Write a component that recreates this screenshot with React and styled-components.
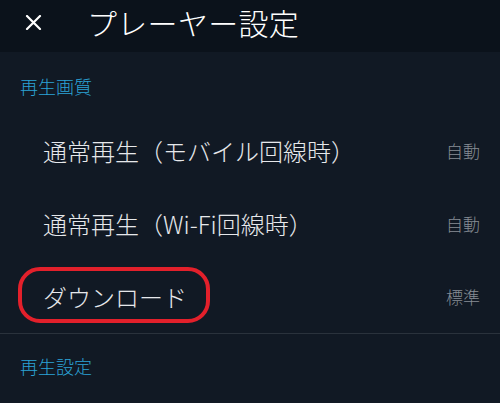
import React from "react";
import styled, { createGlobalStyle } from "styled-components";

const Global = createGlobalStyle`
  html, body { margin: 0; padding: 0; background: #111924; }
  body { font-family: "Noto Sans CJK JP", "Noto Sans", sans-serif; }
`;

const Screen = styled.div`
  width: 500px;
  height: 403px;
  overflow: hidden;
  background: #111924;
  display: flex;
  flex-direction: column;
`;

const Header = styled.header`
  height: 52px;
  flex: none;
  background: #0b121b;
  display: flex;
  align-items: center;
  box-sizing: border-box;
  padding: 0 0 8px 24px;
`;

const CloseBtn = styled.button`
  width: 19px;
  height: 19px;
  padding: 0;
  border: 0;
  background: none;
  display: flex;
  align-items: center;
  justify-content: center;
  margin-right: 44px;
`;

const Title = styled.h1`
  margin: 0;
  font-size: 30px;
  font-weight: 300;
  line-height: 36px;
  color: #ffffff;
  letter-spacing: 0.3px;
`;

const SectionLabel = styled.div`
  padding: ${(p) => (p.$first ? "24px 20px 18px" : "22px 20px 18px")};
  font-size: 18px;
  font-weight: 300;
  line-height: 20px;
  color: #2ba3d6;
`;

const Row = styled.div`
  position: relative;
  height: 73px;
  display: flex;
  align-items: center;
  justify-content: space-between;
  padding: 0 20px 0 43px;
  box-sizing: border-box;
`;

const RowLabel = styled.span`
  font-size: 24px;
  font-weight: 300;
  line-height: 30px;
  color: #e6e8eb;
`;

const RowValue = styled.span`
  font-size: 17px;
  font-weight: 300;
  line-height: 24px;
  color: #878d95;
`;

const Highlight = styled.div`
  position: absolute;
  left: 18px;
  top: 7px;
  width: 192px;
  height: 56px;
  box-sizing: border-box;
  border: 4px solid #e3202b;
  border-radius: 22px;
  pointer-events: none;
`;

const Divider = styled.hr`
  margin: 0;
  border: 0;
  height: 1px;
  background: #2a323c;
`;

const rows = [
  { label: "通常再生（モバイル回線時）", value: "自動" },
  { label: "通常再生（Wi-Fi回線時）", value: "自動" },
  { label: "ダウンロード", value: "標準", highlight: true },
];

export default function App() {
  return (
    <Screen>
      <Global />
      <Header>
        <CloseBtn aria-label="close">
          <svg width="17" height="15" viewBox="0 0 17 15">
            <path d="M2 1 L15 14 M15 1 L2 14" stroke="#fff" strokeWidth="2.2" strokeLinecap="round" />
          </svg>
        </CloseBtn>
        <Title>プレーヤー設定</Title>
      </Header>
      <SectionLabel $first>再生画質</SectionLabel>
      {rows.map((r) => (
        <Row key={r.label}>
          <RowLabel>{r.label}</RowLabel>
          <RowValue>{r.value}</RowValue>
          {r.highlight && <Highlight />}
        </Row>
      ))}
      <Divider />
      <SectionLabel>再生設定</SectionLabel>
    </Screen>
  );
}
